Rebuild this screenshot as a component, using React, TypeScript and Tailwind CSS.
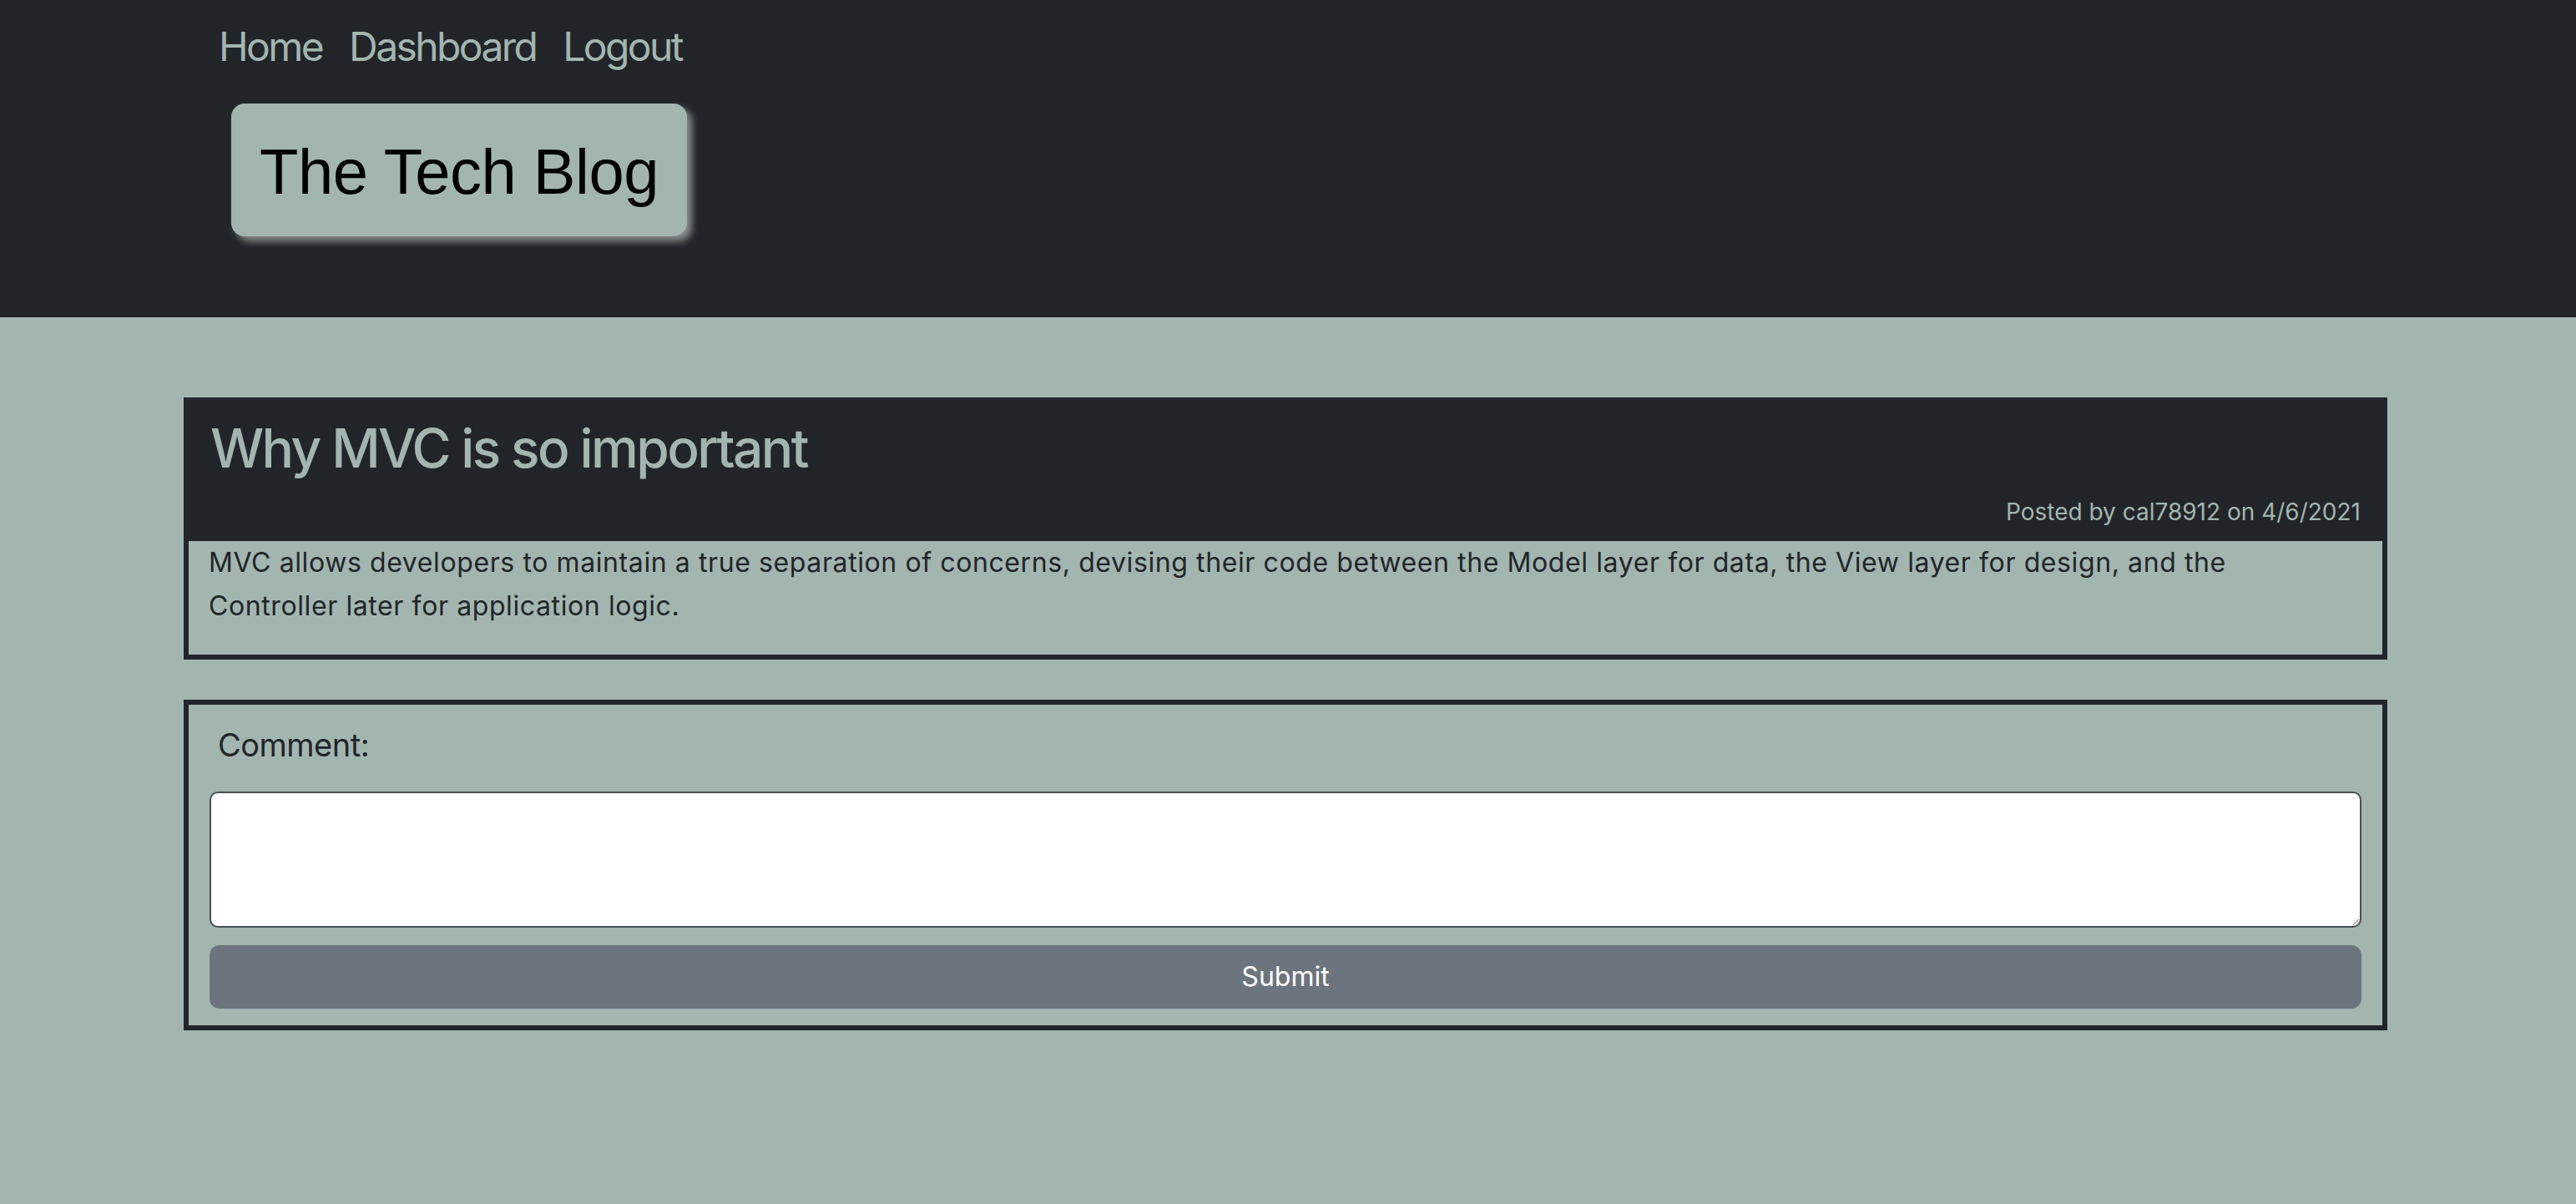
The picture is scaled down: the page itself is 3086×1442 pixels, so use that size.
import React from "react";

// Post page: dark header with nav + logo, post card, comment form
const navLinks = ["Home", "Dashboard", "Logout"];

export default function App() {
  return (
    <div className="min-h-screen bg-[#a3b5af] font-['Inter',sans-serif] text-[#212529]">
      <header className="bg-[#212529] pb-[97px]">
        <div className="ml-[220px] w-[2640px]">
          <nav className="flex gap-[32px] pl-[42px] pt-5 text-[48px] leading-[72px] tracking-[-2.6px] text-[#a3b5af]">
            {navLinks.map((link) => (
              <a key={link} href="#">
                {link}
              </a>
            ))}
          </nav>
          <div className="ml-[57px] mt-8 flex h-[159px] w-[546px] items-center justify-center rounded-2xl bg-[#a3b5af] pt-1 shadow-[6px_6px_8px_#8a8a8a]">
            <h1 className="font-['Liberation_Sans',Arial,sans-serif] text-[76px] leading-none tracking-[-0.5px] text-black">
              The Tech Blog
            </h1>
          </div>
        </div>
      </header>

      <main className="ml-[220px] w-[2640px] pt-[96px]">
        <article className="border-[6px] border-[#212529]">
          <div className="bg-[#212529] px-[26px] pb-[14px] pt-[17px]">
            <h2 className="text-[64px] font-medium leading-[1.2] tracking-[-2.6px] text-[#a3b5af]">
              Why MVC is so important
            </h2>
            <p className="mt-4 text-right text-[28px] leading-[42px] text-[#a3b5af]">
              Posted by cal78912 on 4/6/2021
            </p>
          </div>
          <div className="px-6 pb-8">
            <p className="text-[32px] leading-[52px] tracking-[0.6px]">
              MVC allows developers to maintain a true separation of concerns, devising their code between the Model
              layer for data, the View layer for design, and the
              <br />
              Controller later for application logic.
            </p>
          </div>
        </article>

        <form className="mt-12 border-[6px] border-[#212529] px-[25px] pb-5 pt-5">
          <label htmlFor="comment" className="block pl-[10px] text-[38px] leading-[57px] tracking-[-0.5px]">
            Comment:
          </label>
          <textarea
            id="comment"
            className="mt-[27px] block h-[163px] w-full rounded-[10px] border-2 border-[#4b4f52] bg-white"
          />
          <button
            type="button"
            className="mt-[21px] block h-[76px] w-full rounded-xl bg-[#6c757d] text-[32px] text-white"
          >
            Submit
          </button>
        </form>
      </main>
    </div>
  );
}
